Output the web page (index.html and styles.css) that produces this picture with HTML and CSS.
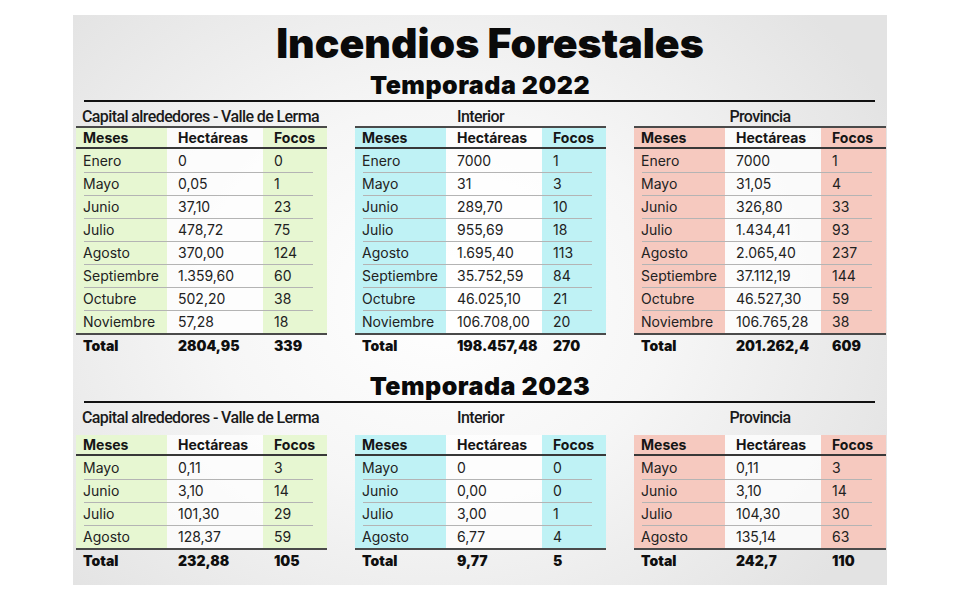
FILE: index.html
```html
<!DOCTYPE html>
<html lang="es">
<head>
<meta charset="utf-8">
<title>Incendios Forestales</title>
<link rel="stylesheet" href="styles.css">
</head>
<body>
<div class="panel">
  <h1 class="title">Incendios Forestales</h1>

  <h2 class="season">Temporada 2022</h2>
  <div class="rule"></div>
  <div class="tables">
    <section class="block green">
      <div class="label left">Capital alrededores - Valle de Lerma</div>
      <div class="tbl topline">
        <div class="row head"><span>Meses</span><span>Hectáreas</span><span>Focos</span></div>
        <div class="row d"><span>Enero</span><span>0</span><span>0</span></div>
        <div class="row d"><span>Mayo</span><span>0,05</span><span>1</span></div>
        <div class="row d"><span>Junio</span><span>37,10</span><span>23</span></div>
        <div class="row d"><span>Julio</span><span>478,72</span><span>75</span></div>
        <div class="row d"><span>Agosto</span><span>370,00</span><span>124</span></div>
        <div class="row d"><span>Septiembre</span><span>1.359,60</span><span>60</span></div>
        <div class="row d"><span>Octubre</span><span>502,20</span><span>38</span></div>
        <div class="row d"><span>Noviembre</span><span>57,28</span><span>18</span></div>
        <div class="row total"><span>Total</span><span>2804,95</span><span>339</span></div>
      </div>
    </section>
    <section class="block cyan">
      <div class="label">Interior</div>
      <div class="tbl topline">
        <div class="row head"><span>Meses</span><span>Hectáreas</span><span>Focos</span></div>
        <div class="row d"><span>Enero</span><span>7000</span><span>1</span></div>
        <div class="row d"><span>Mayo</span><span>31</span><span>3</span></div>
        <div class="row d"><span>Junio</span><span>289,70</span><span>10</span></div>
        <div class="row d"><span>Julio</span><span>955,69</span><span>18</span></div>
        <div class="row d"><span>Agosto</span><span>1.695,40</span><span>113</span></div>
        <div class="row d"><span>Septiembre</span><span>35.752,59</span><span>84</span></div>
        <div class="row d"><span>Octubre</span><span>46.025,10</span><span>21</span></div>
        <div class="row d"><span>Noviembre</span><span>106.708,00</span><span>20</span></div>
        <div class="row total"><span>Total</span><span>198.457,48</span><span>270</span></div>
      </div>
    </section>
    <section class="block pink">
      <div class="label">Provincia</div>
      <div class="tbl topline">
        <div class="row head"><span>Meses</span><span>Hectáreas</span><span>Focos</span></div>
        <div class="row d"><span>Enero</span><span>7000</span><span>1</span></div>
        <div class="row d"><span>Mayo</span><span>31,05</span><span>4</span></div>
        <div class="row d"><span>Junio</span><span>326,80</span><span>33</span></div>
        <div class="row d"><span>Julio</span><span>1.434,41</span><span>93</span></div>
        <div class="row d"><span>Agosto</span><span>2.065,40</span><span>237</span></div>
        <div class="row d"><span>Septiembre</span><span>37.112,19</span><span>144</span></div>
        <div class="row d"><span>Octubre</span><span>46.527,30</span><span>59</span></div>
        <div class="row d"><span>Noviembre</span><span>106.765,28</span><span>38</span></div>
        <div class="row total"><span>Total</span><span>201.262,4</span><span>609</span></div>
      </div>
    </section>
  </div>

  <h2 class="season second">Temporada 2023</h2>
  <div class="rule"></div>
  <div class="tables">
    <section class="block green">
      <div class="label left">Capital alrededores - Valle de Lerma</div>
      <div class="tbl gap">
        <div class="row head"><span>Meses</span><span>Hectáreas</span><span>Focos</span></div>
        <div class="row d"><span>Mayo</span><span>0,11</span><span>3</span></div>
        <div class="row d"><span>Junio</span><span>3,10</span><span>14</span></div>
        <div class="row d"><span>Julio</span><span>101,30</span><span>29</span></div>
        <div class="row d"><span>Agosto</span><span>128,37</span><span>59</span></div>
        <div class="row total"><span>Total</span><span>232,88</span><span>105</span></div>
      </div>
    </section>
    <section class="block cyan">
      <div class="label">Interior</div>
      <div class="tbl gap">
        <div class="row head"><span>Meses</span><span>Hectáreas</span><span>Focos</span></div>
        <div class="row d"><span>Mayo</span><span>0</span><span>0</span></div>
        <div class="row d"><span>Junio</span><span>0,00</span><span>0</span></div>
        <div class="row d"><span>Julio</span><span>3,00</span><span>1</span></div>
        <div class="row d"><span>Agosto</span><span>6,77</span><span>4</span></div>
        <div class="row total"><span>Total</span><span>9,77</span><span>5</span></div>
      </div>
    </section>
    <section class="block pink">
      <div class="label">Provincia</div>
      <div class="tbl gap">
        <div class="row head"><span>Meses</span><span>Hectáreas</span><span>Focos</span></div>
        <div class="row d"><span>Mayo</span><span>0,11</span><span>3</span></div>
        <div class="row d"><span>Junio</span><span>3,10</span><span>14</span></div>
        <div class="row d"><span>Julio</span><span>104,30</span><span>30</span></div>
        <div class="row d"><span>Agosto</span><span>135,14</span><span>63</span></div>
        <div class="row total"><span>Total</span><span>242,7</span><span>110</span></div>
      </div>
    </section>
  </div>
</div>
</body>
</html>
```

FILE: styles.css
```css
html, body {
  margin: 0;
  padding: 0;
  background: #ffffff;
}

body {
  font-family: Inter, "Liberation Sans", sans-serif;
  color: #222;
}

.panel {
  width: 814px;
  height: 570px;
  margin: 15px 0 0 73px;
  box-sizing: border-box;
  padding-top: 6px;
  background: radial-gradient(ellipse 62% 75% at 45% 50%, #ffffff 0%, #f6f6f6 45%, #e3e3e3 100%);
}

.title {
  margin: 0;
  padding-left: 20px;
  text-align: center;
  font-family: Inter, "Liberation Sans", sans-serif;
  font-weight: 900;
  font-size: 41px;
  line-height: 44px;
  letter-spacing: 0;
  color: #0a0a0a;
}

.season {
  margin: 5px 0 0;
  text-align: center;
  font-family: Inter, "Liberation Sans", sans-serif;
  font-weight: 900;
  font-size: 25px;
  line-height: 30px;
  letter-spacing: 0.5px;
  color: #0a0a0a;
}

.season.second {
  margin-top: 15px;
}

.rule {
  height: 2px;
  margin: 0 12px 0 11px;
  background: #111;
}

.tables {
  display: grid;
  grid-template-columns: 251px 251px 252px;
  justify-content: space-between;
  padding: 0 1px 0 3px;
}

.label {
  padding-top: 5px;
  height: 19px;
  line-height: 19px;
  text-align: center;
  white-space: nowrap;
  font-family: Roboto, "Liberation Sans", sans-serif;
  font-weight: 500;
  font-size: 16px;
  letter-spacing: -0.6px;
  color: #1a1a1a;
}

.label.left {
  text-align: left;
  padding-left: 6px;
}

.tbl.gap {
  margin-top: 8px;
}

.row {
  display: grid;
  grid-template-columns: 91px 96px 1fr;
  height: 23px;
  font-size: 14px;
  line-height: 23px;
  box-sizing: border-box;
}

.row span {
  padding-left: 11px;
  white-space: nowrap;
}

.row span:first-child {
  padding-left: 7px;
}

.green { --c: #e7f7d2; }
.cyan { --c: #bff2f5; }
.pink { --c: #f6c9bf; }

.row.head span,
.row.d span {
  background-color: var(--c);
}

.row.head span:nth-child(2),
.row.d span:nth-child(2) {
  background-color: rgba(255, 255, 255, 0.75);
}

.row.head {
  height: 21px;
  line-height: 19px;
  font-weight: 700;
  color: #151515;
  border-bottom: 2px solid #383838;
}

.topline .row.head {
  height: 23px;
  border-top: 2px solid #4a4a4a;
}

.row.d + .row.d span {
  background-image: linear-gradient(#b4b4b4, #b4b4b4);
  background-repeat: no-repeat;
  background-size: 100% 1px;
  background-position: left top;
}

.row.d + .row.d span:first-child {
  background-size: calc(100% - 8px) 1px;
  background-position: right top;
}

.row.d + .row.d span:last-child {
  background-size: calc(100% - 14px) 1px;
  background-position: left top;
}

.row.total {
  border-top: 2px solid #4a4a4a;
  line-height: 21px;
  font-weight: 900;
  color: #0f0f0f;
}
```
